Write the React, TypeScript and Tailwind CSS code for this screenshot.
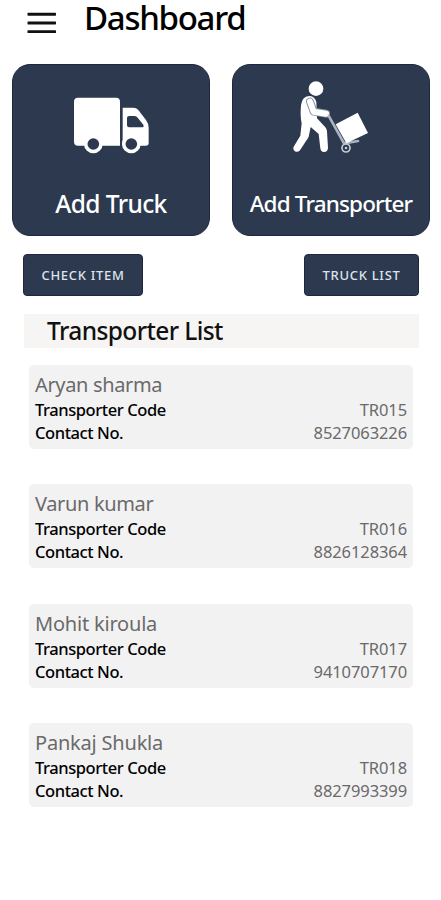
const transporters = [
  { name: "Aryan sharma", code: "TR015", contact: "8527063226", nameClass: "tracking-[-0.35px]" },
  { name: "Varun kumar", code: "TR016", contact: "8826128364", nameClass: "tracking-[-0.35px]" },
  { name: "Mohit kiroula", code: "TR017", contact: "9410707170", nameClass: "tracking-[-0.2px]" },
  { name: "Pankaj Shukla", code: "TR018", contact: "8827993399", nameClass: "tracking-[-0.2px]" },
];

const MenuIcon = () => (
  <svg width="30" height="22" viewBox="0 0 30 22" fill="#111111">
    <rect x="0.5" y="0.8" width="28.5" height="2.9" rx="0.6" />
    <rect x="0.5" y="9.5" width="28.5" height="2.9" rx="0.6" />
    <rect x="0.5" y="18.2" width="28.5" height="2.9" rx="0.6" />
  </svg>
);

const TruckIcon = () => (
  <svg width="110" height="80" viewBox="0 0 330 240" fill="none">
    <path
      d="M54 38H168Q180 38 180 50V182H54Q42 182 42 170V50Q42 38 54 38Z"
      fill="#ffffff"
    />
    <path
      d="M188 68H220Q229 68 235 75L258 105Q266 116 266 128V174Q266 182 257 182H188Z"
      fill="#ffffff"
    />
    <path
      d="M207 93H224Q229 93 233 98L250 119Q253 127 246 127H207Q201 127 201 121V99Q201 93 207 93Z"
      fill="#2c394f"
    />
    <circle cx="100" cy="177" r="28" fill="#ffffff" />
    <circle cx="100" cy="177" r="17.5" fill="#2c394f" />
    <circle cx="214" cy="177" r="28" fill="#ffffff" />
    <circle cx="214" cy="177" r="17.5" fill="#2c394f" />
  </svg>
);

const TransporterIcon = () => (
  <svg
    width="110"
    height="95"
    viewBox="0 0 330 285"
    fill="none"
    strokeLinecap="round"
    strokeLinejoin="round"
  >
    <circle cx="108" cy="56" r="22" fill="#ffffff" />
    <path
      d="M63 106Q66 78 90 78Q104 80 109 96L111 145L136 172Q140 177 141 184L144 234Q143 246 132 246Q122 246 121 235L116 192L92 171L86 200Q84 205 80 210L60 241Q52 249 44 243Q37 237 42 229L61 197L65 160Q60 140 63 106Z"
      fill="#ffffff"
    />
    <path d="M90 95L101 125L138 131" stroke="#8993a3" strokeWidth="24" />
    <path d="M90 95L101 125L138 131" stroke="#ffffff" strokeWidth="18" />
    <path d="M147 139L192 220L234 213" stroke="#aab3c0" strokeWidth="8" />
    <path d="M167 163L233 128L264 189L199 220Z" fill="#ffffff" />
    <circle cx="198" cy="234" r="12" fill="#2c394f" stroke="#c5ccd6" strokeWidth="5" />
    <circle cx="198" cy="234" r="4" fill="#c5ccd6" />
  </svg>
);

export default function App() {
  return (
    <div className="min-h-[900px] w-[441px] bg-white font-['Noto_Sans',sans-serif] text-black">
      <header className="flex h-16 items-start pl-[27px]">
        <button type="button" aria-label="Menu" className="pt-3">
          <MenuIcon />
        </button>
        <h1 className="ml-[27px] text-[33px] leading-9 font-medium tracking-[-1.3px]">
          Dashboard
        </h1>
      </header>

      <div className="flex gap-[22px] pl-3">
        <button
          type="button"
          className="flex h-[172px] w-[198px] flex-col items-center rounded-[18px] border border-[#1d2740] bg-[#2c394f] text-white"
        >
          <span className="mt-5 mr-[-8px] h-[103px]">
            <TruckIcon />
          </span>
          <span className="text-[24.5px] leading-8 font-medium tracking-[-0.6px] whitespace-nowrap">
            Add Truck
          </span>
        </button>
        <button
          type="button"
          className="flex h-[172px] w-[198px] flex-col items-center rounded-[18px] border border-[#1d2740] bg-[#2c394f] text-white"
        >
          <span className="mt-[5px] mr-[-8px] h-[118px]">
            <TransporterIcon />
          </span>
          <span className="text-[22.5px] leading-8 font-medium tracking-[-0.85px] whitespace-nowrap">
            Add Transporter
          </span>
        </button>
      </div>

      <div className="mt-[18px] flex justify-between pr-[22px] pl-[23px]">
        <button
          type="button"
          className="h-[42px] w-[120px] rounded-[4px] border border-[#1d2740] bg-[#2c394f] pt-0.5 text-[13px] font-medium tracking-[0.7px] whitespace-nowrap text-[#dfe3ea]"
        >
          CHECK ITEM
        </button>
        <button
          type="button"
          className="h-[42px] w-[115px] rounded-[4px] border border-[#1d2740] bg-[#2c394f] pt-0.5 text-[13px] font-medium tracking-[0.7px] whitespace-nowrap text-[#dfe3ea]"
        >
          TRUCK LIST
        </button>
      </div>

      <h2 className="mt-[18px] mr-[22px] ml-6 h-[34px] bg-[#f7f5f4] pl-[23px] text-[24.5px] leading-[33px] font-medium tracking-[-0.6px] text-[#111111]">
        Transporter List
      </h2>

      <ul className="mt-[17px] mr-7 ml-[29px] flex flex-col gap-[35.3px]">
        {transporters.map((item) => (
          <li
            key={item.code}
            className="h-[84px] rounded-[5px] bg-[#f3f2f3] px-1.5 pt-1.5 text-[16.5px] leading-[23px]"
          >
            <p className={`h-[27px] text-[20px] leading-[27px] text-[#6a6a6a] ${item.nameClass}`}>
              {item.name}
            </p>
            <div className="flex justify-between">
              <span className="font-medium tracking-[-0.42px]">Transporter Code</span>
              <span className="tracking-[-0.1px] text-[#6a6a6a]">{item.code}</span>
            </div>
            <div className="flex justify-between">
              <span className="font-medium tracking-[-0.42px]">Contact No.</span>
              <span className="tracking-[-0.1px] text-[#6a6a6a]">{item.contact}</span>
            </div>
          </li>
        ))}
      </ul>
    </div>
  );
}
